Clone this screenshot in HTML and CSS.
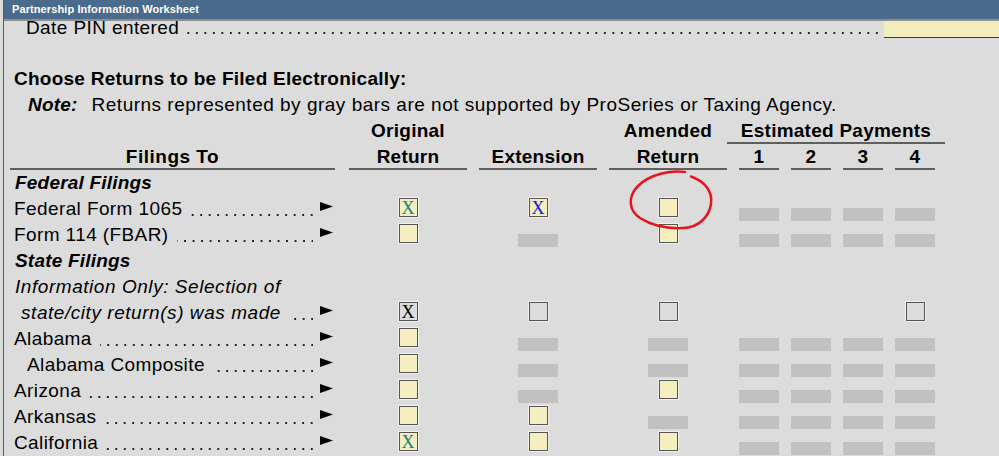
FILE: index.html
```html
<!DOCTYPE html>
<html lang="en">
<head>
    <meta charset="UTF-8">
    <title>Partnership Information Worksheet</title>
    <link rel="stylesheet" href="styles.css">
</head>
<body>
    <div class="window">
        <div class="title-bar">Partnership Information Worksheet</div>

        <div class="content">
            <div class="pin-row">
                <span>Date PIN entered</span>
                <span class="dots"></span>
                <span class="pin-field"></span>
            </div>
            <div class="spacer"></div>

            <div class="section-title">Choose Returns to be Filed Electronically:</div>
            <div class="note"><b>Note:</b>Returns represented by gray bars are not supported by ProSeries or Taxing Agency.</div>

            <!-- column headings -->
            <div class="row head">
                <div></div>
                <div class="hd">Original</div>
                <div></div>
                <div class="hd">Amended</div>
                <div class="hd est-title">Estimated Payments</div>
            </div>
            <div class="row head">
                <div class="hd under filings-to">Filings To</div>
                <div class="hd under">Return</div>
                <div class="hd under">Extension</div>
                <div class="hd under">Return</div>
                <div class="hd under">1</div>
                <div class="hd under">2</div>
                <div class="hd under">3</div>
                <div class="hd under">4</div>
            </div>

            <div class="row"><div class="group">Federal Filings</div></div>

            <div class="row">
                <div class="label"><span>Federal Form 1065</span><span class="dots"></span><svg class="arrow" width="13" height="9"><polygon points="0,0 13,4.5 0,9"/></svg></div>
                <div class="cell"><span class="box x-teal">X</span></div>
                <div class="cell"><span class="box x-blue">X</span></div>
                <div class="cell"><span class="box"></span></div>
                <div class="cell"><span class="bar"></span></div>
                <div class="cell"><span class="bar"></span></div>
                <div class="cell"><span class="bar"></span></div>
                <div class="cell"><span class="bar"></span></div>
            </div>

            <div class="row">
                <div class="label"><span>Form 114 (FBAR)</span><span class="dots"></span><svg class="arrow" width="13" height="9"><polygon points="0,0 13,4.5 0,9"/></svg></div>
                <div class="cell"><span class="box"></span></div>
                <div class="cell"><span class="bar"></span></div>
                <div class="cell"><span class="box"></span></div>
                <div class="cell"><span class="bar"></span></div>
                <div class="cell"><span class="bar"></span></div>
                <div class="cell"><span class="bar"></span></div>
                <div class="cell"><span class="bar"></span></div>
            </div>

            <div class="row"><div class="group">State Filings</div></div>

            <div class="row"><div class="label info">Information Only: Selection of</div></div>

            <div class="row">
                <div class="label info indent-sm"><span>state/city return(s) was made</span><span class="dots"></span><svg class="arrow" width="13" height="9"><polygon points="0,0 13,4.5 0,9"/></svg></div>
                <div class="cell"><span class="box plain">X</span></div>
                <div class="cell"><span class="box plain"></span></div>
                <div class="cell"><span class="box plain"></span></div>
                <div class="cell"></div>
                <div class="cell"></div>
                <div class="cell"></div>
                <div class="cell"><span class="box plain"></span></div>
            </div>

            <div class="row">
                <div class="label"><span>Alabama</span><span class="dots"></span><svg class="arrow" width="13" height="9"><polygon points="0,0 13,4.5 0,9"/></svg></div>
                <div class="cell"><span class="box"></span></div>
                <div class="cell"><span class="bar"></span></div>
                <div class="cell"><span class="bar"></span></div>
                <div class="cell"><span class="bar"></span></div>
                <div class="cell"><span class="bar"></span></div>
                <div class="cell"><span class="bar"></span></div>
                <div class="cell"><span class="bar"></span></div>
            </div>

            <div class="row">
                <div class="label indent"><span>Alabama Composite</span><span class="dots"></span><svg class="arrow" width="13" height="9"><polygon points="0,0 13,4.5 0,9"/></svg></div>
                <div class="cell"><span class="box"></span></div>
                <div class="cell"><span class="bar"></span></div>
                <div class="cell"><span class="bar"></span></div>
                <div class="cell"><span class="bar"></span></div>
                <div class="cell"><span class="bar"></span></div>
                <div class="cell"><span class="bar"></span></div>
                <div class="cell"><span class="bar"></span></div>
            </div>

            <div class="row">
                <div class="label"><span>Arizona</span><span class="dots"></span><svg class="arrow" width="13" height="9"><polygon points="0,0 13,4.5 0,9"/></svg></div>
                <div class="cell"><span class="box"></span></div>
                <div class="cell"><span class="bar"></span></div>
                <div class="cell"><span class="box"></span></div>
                <div class="cell"><span class="bar"></span></div>
                <div class="cell"><span class="bar"></span></div>
                <div class="cell"><span class="bar"></span></div>
                <div class="cell"><span class="bar"></span></div>
            </div>

            <div class="row">
                <div class="label"><span>Arkansas</span><span class="dots"></span><svg class="arrow" width="13" height="9"><polygon points="0,0 13,4.5 0,9"/></svg></div>
                <div class="cell"><span class="box"></span></div>
                <div class="cell"><span class="box"></span></div>
                <div class="cell"><span class="bar"></span></div>
                <div class="cell"><span class="bar"></span></div>
                <div class="cell"><span class="bar"></span></div>
                <div class="cell"><span class="bar"></span></div>
                <div class="cell"><span class="bar"></span></div>
            </div>

            <div class="row">
                <div class="label"><span>California</span><span class="dots"></span><svg class="arrow" width="13" height="9"><polygon points="0,0 13,4.5 0,9"/></svg></div>
                <div class="cell"><span class="box x-teal">X</span></div>
                <div class="cell"><span class="box"></span></div>
                <div class="cell"><span class="box"></span></div>
                <div class="cell"><span class="bar"></span></div>
                <div class="cell"><span class="bar"></span></div>
                <div class="cell"><span class="bar"></span></div>
                <div class="cell"><span class="bar"></span></div>
            </div>
        </div>
    </div>

    <!-- hand-drawn annotation around the Amended box -->
    <svg class="markup" width="999" height="456">
        <path d="M685,172 C671,170 650,174 638,186 C628,196 628,210 640,218 C651,225 666,229 684,228 C699,227 709,217 711,204 C713,191 704,181 691,176.5"/>
    </svg>
</body>
</html>
```

FILE: styles.css
```css
body {
    margin: 0;
    width: 999px;
    height: 456px;
    overflow: hidden;
    background-color: #dcdcdc;
    font-family: "Liberation Sans", Arial, sans-serif;
    color: #000;
    position: relative;
}
.window {
    margin-left: 3px;
    border-left: 1px solid #5c5c5c;
    height: 456px;
}
.title-bar {
    height: 19px;
    line-height: 19px;
    padding-left: 8px;
    background-color: #4a6b8b;
    border-bottom: 2px solid #8e8e8e;
    color: #fff;
    font-size: 11px;
    font-weight: bold;
    letter-spacing: 0.1px;
}
.content {
    padding-left: 6px;
    font-size: 19px;
    line-height: 26px;
    letter-spacing: 0.4px;
}
.pin-row {
    display: flex;
    height: 19px;
    line-height: 13px;
    padding-left: 16px;
}
.pin-row .dots {
    margin: 0 6px 0 8px;
    background-position: right 0 top 11px;
}
.pin-field {
    width: 115px;
    height: 16px;
    background-color: #f3ecbd;
    border-bottom: 1px solid #3a3a3a;
}
.spacer {
    height: 26px;
}
.section-title {
    height: 26px;
    padding-left: 4px;
    font-weight: bold;
    letter-spacing: 0.25px;
}
.note {
    height: 26px;
    padding-left: 18px;
    letter-spacing: 0.5px;
}
.note b {
    font-style: italic;
    margin-right: 14px;
    letter-spacing: 0.2px;
}
.row {
    display: grid;
    grid-template-columns: 327px repeat(3, 118px) repeat(4, 40px);
    column-gap: 12px;
    height: 26px;
}
.hd {
    font-weight: bold;
    text-align: center;
    height: 26px;
    box-sizing: border-box;
    letter-spacing: 0.25px;
}
.under {
    border-bottom: 2px solid #5e5e5e;
}
.filings-to {
    margin-right: 2px;
    letter-spacing: 0.5px;
}
.est-title {
    grid-column: 5 / 9;
    margin: 0 -10px 0 -12px;
    border-bottom: 2px solid #5e5e5e;
}
.group {
    padding-left: 5px;
    font-weight: bold;
    font-style: italic;
    white-space: nowrap;
    letter-spacing: 0.2px;
}
.label {
    display: flex;
    padding-left: 4px;
    white-space: nowrap;
}
.label.info {
    font-style: italic;
    padding-left: 5px;
    letter-spacing: 0.55px;
}
.label.indent-sm {
    padding-left: 11px;
}
.label.indent {
    padding-left: 17px;
}
.dots {
    flex: 1;
    margin: 0 7px 0 8px;
    background-image: linear-gradient(to right, transparent 6.5px, #222 6.5px);
    background-size: 8.5px 2px;
    background-repeat: repeat-x;
    background-position: right 0 top 18px;
}
.arrow {
    margin: 6px 4px 0 0;
    flex: none;
}
.arrow polygon {
    fill: #000;
}
.cell {
    display: flex;
    justify-content: center;
    align-items: flex-start;
}
.box {
    box-sizing: border-box;
    width: 19px;
    height: 19px;
    margin-top: 2px;
    border: 1px solid #555;
    background-color: #f4eec0;
    box-shadow: 0 0 0 1px #f0f0f0;
    font-family: "Liberation Serif", "Times New Roman", serif;
    font-size: 18px;
    line-height: 18px;
    text-align: center;
    letter-spacing: 0;
}
.box.plain {
    background-color: #dcdcdc;
}
.x-teal {
    color: #13847f;
}
.x-blue {
    color: #1414f5;
}
.bar {
    width: 40px;
    height: 13px;
    margin-top: 12px;
    background-color: #c1c1c1;
}
.markup {
    position: absolute;
    left: 0;
    top: 0;
    pointer-events: none;
}
.markup path {
    fill: none;
    stroke: #e8141c;
    stroke-width: 2.5;
    stroke-linecap: round;
}
```
